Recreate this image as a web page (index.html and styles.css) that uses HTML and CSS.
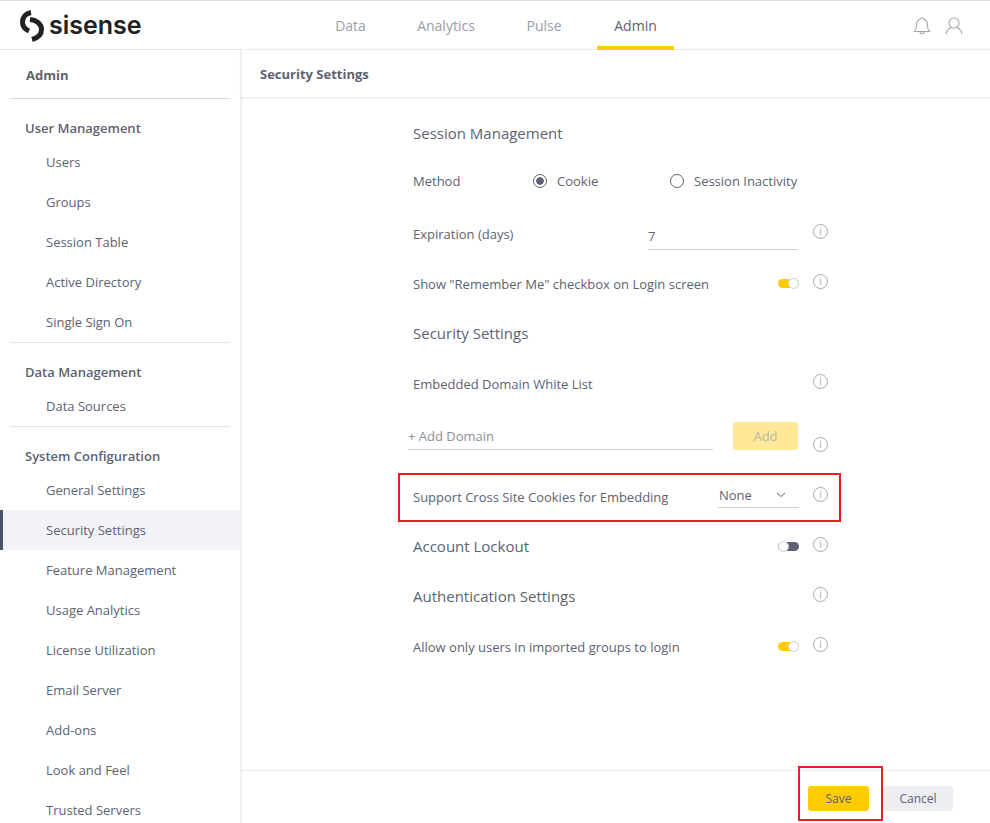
FILE: index.html
```html
<!DOCTYPE html>
<html lang="en">
<head>
    <meta charset="UTF-8">
    <meta name="viewport" content="width=device-width, initial-scale=1.0">
    <title>Security Settings</title>
    <link rel="stylesheet" href="styles.css">
</head>
<body>
    <header class="topbar">
        <div class="logo">
            <svg class="logo-mark" width="26" height="32" viewBox="0 0 26 32">
                <path d="M12 2.500C6.500 3.500 3.500 7.500 3.500 12C3.500 16.500 6.500 19.500 10 21" fill="none" stroke="#222" stroke-width="5"/>
                <path d="M11 9.500C17 10 22.500 13.500 22.500 19.500C22.500 24.500 18.500 28 13 29.500" fill="none" stroke="#222" stroke-width="5"/>
            </svg>
            <span class="logo-text">sisense</span>
        </div>
        <nav class="main-nav">
            <a class="nav-item">Data</a>
            <a class="nav-item">Analytics</a>
            <a class="nav-item">Pulse</a>
            <a class="nav-item active">Admin</a>
        </nav>
        <div class="top-icons">
            <svg width="18" height="20" viewBox="0 0 18 20" fill="none" stroke="#a4a7b0" stroke-width="1.100">
                <path d="M1.500 15.500C3 14 3.500 12.500 3.500 9.500C3.500 5.500 5.500 3.500 7.500 3C7.800 1.300 10.200 1.300 10.500 3C12.500 3.500 14.500 5.500 14.500 9.500C14.500 12.500 15 14 16.500 15.500Z"/>
                <path d="M7 15.500C7 18.500 11 18.500 11 15.500"/>
            </svg>
            <svg width="18" height="20" viewBox="0 0 18 20" fill="none" stroke="#a4a7b0" stroke-width="1.100">
                <circle cx="9" cy="7" r="5"/>
                <path d="M1 18C1.500 14.500 4 12.500 6 11.500M17 18C16.500 14.500 14 12.500 12 11.500"/>
            </svg>
        </div>
    </header>

    <div class="layout">
        <aside class="sidebar">
            <div class="side-title">Admin</div>
            <div class="side-group">
                <div class="group-name">User Management</div>
                <a class="side-link">Users</a>
                <a class="side-link">Groups</a>
                <a class="side-link">Session Table</a>
                <a class="side-link">Active Directory</a>
                <a class="side-link">Single Sign On</a>
            </div>
            <div class="side-group">
                <div class="group-name">Data Management</div>
                <a class="side-link">Data Sources</a>
            </div>
            <div class="side-group last">
                <div class="group-name">System Configuration</div>
                <a class="side-link">General Settings</a>
                <a class="side-link current">Security Settings</a>
                <a class="side-link">Feature Management</a>
                <a class="side-link">Usage Analytics</a>
                <a class="side-link">License Utilization</a>
                <a class="side-link">Email Server</a>
                <a class="side-link">Add-ons</a>
                <a class="side-link">Look and Feel</a>
                <a class="side-link">Trusted Servers</a>
            </div>
        </aside>

        <main class="content">
            <div class="content-head">Security Settings</div>
            <div class="settings">
                <div class="form">
                    <div class="row row-first"><h3>Session Management</h3></div>
                    <div class="row row-method">
                        <span class="method-label">Method</span>
                        <span class="radio checked"></span><span class="radio-text cookie">Cookie</span>
                        <span class="radio"></span><span class="radio-text">Session Inactivity</span>
                    </div>
                    <div class="row row-expire">
                        <span class="grow">Expiration (days)</span>
                        <span class="field">7</span>
                        <span class="info up">i</span>
                    </div>
                    <div class="row">
                        <span class="grow">Show "Remember Me" checkbox on Login screen</span>
                        <span class="toggle on"></span>
                        <span class="info up">i</span>
                    </div>
                    <div class="row">
                        <h3 class="grow heading-up">Security Settings</h3>
                    </div>
                    <div class="row">
                        <span class="grow">Embedded Domain White List</span>
                        <span class="info up">i</span>
                    </div>
                    <div class="row row-domain">
                        <span class="domain-field">+ Add Domain</span>
                        <button class="btn-add">Add</button>
                        <span class="info low">i</span>
                    </div>
                    <div class="row row-cross">
                        <span class="grow">Support Cross Site Cookies for Embedding</span>
                        <span class="select">None
                            <svg width="10" height="6" viewBox="0 0 10 6" fill="none" stroke="#5b6372" stroke-width="1"><path d="M1 1L5 4.500L9 1"/></svg>
                        </span>
                        <span class="info up">i</span>
                    </div>
                    <div class="row">
                        <h3 class="grow heading-up">Account Lockout</h3>
                        <span class="toggle off"></span>
                        <span class="info up">i</span>
                    </div>
                    <div class="row">
                        <h3 class="grow heading-up">Authentication Settings</h3>
                        <span class="info up">i</span>
                    </div>
                    <div class="row">
                        <span class="grow">Allow only users in imported groups to login</span>
                        <span class="toggle on"></span>
                        <span class="info up">i</span>
                    </div>
                </div>
            </div>
            <footer class="actions">
                <button class="btn-save">Save</button>
                <button class="btn-cancel">Cancel</button>
            </footer>
        </main>
    </div>
</body>
</html>
```

FILE: styles.css
```css
*, *::after {
    box-sizing: border-box;
}
html, body {
    height: 100%;
}
body {
    margin: 0;
    overflow: hidden;
    display: flex;
    flex-direction: column;
    background-color: white;
    font-family: 'Open Sans', 'Liberation Sans', sans-serif;
    font-size: 13px;
    color: #5b6372;
}
.topbar {
    height: 50px;
    flex: none;
    display: flex;
    align-items: center;
    border-top: 1px solid #dcdde1;
    border-bottom: 1px solid #ececee;
    position: relative;
}
.logo {
    width: 240px;
    flex: none;
    display: flex;
    align-items: center;
    padding: 0 0 0 19px;
}
.logo-mark {
    margin-top: 1px;
}
.logo-text {
    margin-left: 4px;
    font-family: 'Inter', sans-serif;
    font-size: 25px;
    font-weight: 600;
    color: #222;
    line-height: 30px;
}
.main-nav {
    display: flex;
    margin-left: 72px;
    height: 100%;
}
.nav-item {
    width: 77px;
    margin-right: 14px;
    font-size: 14px;
    text-align: center;
    line-height: 49px;
    color: #9a9da6;
}
.nav-item:nth-child(2) {
    width: 86px;
    margin-right: 18px;
}
.nav-item:nth-child(3) {
    width: 74px;
    margin-right: 16px;
}
.nav-item.active {
    color: #5b6372;
    height: 49px;
    border-bottom: 4px solid #ffcb05;
}
.top-icons {
    position: absolute;
    right: 27px;
    top: 15px;
    display: flex;
    gap: 14px;
}
.layout {
    flex: 1;
    display: flex;
    min-height: 0;
}
.sidebar {
    width: 241px;
    flex: none;
    overflow: hidden;
    border-right: 1px solid #ececee;
    box-shadow: 1px 0 3px rgba(0,0,0,0.06);
    position: relative;
    z-index: 1;
}
.side-title {
    height: 49px;
    margin: 0 10px;
    padding: 16px 16px 0;
    font-weight: 700;
    border-bottom: 1px solid #d9dade;
}
.side-group {
    border-bottom: 1px solid #e3e4e7;
    margin: 0 10px;
}
.side-group.last {
    border-bottom: none;
}
.group-name {
    height: 43px;
    padding: 19px 15px 0;
    font-weight: 600;
    line-height: 20px;
}
.side-link {
    display: block;
    height: 40px;
    margin: 0 -10px;
    padding-left: 46px;
    line-height: 40px;
}
.side-link.current {
    background-color: #f3f3f7;
    border-left: 3px solid #4b5265;
    padding-left: 43px;
}
.content {
    flex: 1;
    min-width: 0;
    display: flex;
    flex-direction: column;
}
.content-head {
    height: 48px;
    flex: none;
    padding: 0 19px;
    font-weight: 700;
    line-height: 48px;
    border-bottom: 1px solid #ececee;
    box-shadow: 0 1px 3px rgba(0,0,0,0.05);
}
.settings {
    flex: 1;
    padding: 11px 0 0 172px;
}
.form {
    width: 415px;
}
.row {
    height: 50px;
    display: flex;
    align-items: center;
}
h3 {
    margin: 0;
    font-size: 15px;
    font-weight: 400;
}
.heading-up {
    margin-top: -2px;
}
.grow {
    flex: 1;
}
.row-first {
    height: 48px;
    margin-bottom: 1px;
}
.row-method {
    height: 46px;
}
.row-expire {
    margin-top: 5px;
}
.method-label {
    width: 120px;
}
.radio {
    width: 14px;
    height: 14px;
    border: 1px solid #5b6372;
    border-radius: 50%;
    margin-right: 10px;
}
.radio.checked {
    background: radial-gradient(circle, #5b6372 0 3.5px, white 4px);
}
.radio-text.cookie {
    width: 113px;
}
.field {
    width: 150px;
    height: 30px;
    margin-top: 1px;
    margin-right: 15px;
    padding-top: 7px;
    line-height: 18px;
    border-bottom: 1px solid #cfd0d5;
}
.toggle {
    width: 21px;
    height: 9px;
    margin-top: -1px;
    margin-right: 14px;
    border-radius: 5px;
    position: relative;
}
.toggle::after {
    content: "";
    position: absolute;
    top: -1px;
    width: 11px;
    height: 11px;
    border-radius: 50%;
    background-color: white;
    border: 1px solid #cfd0d5;
}
.toggle.on {
    background-color: #ffcb05;
}
.toggle.on::after {
    right: 0;
}
.toggle.off {
    background-color: #5b6372;
}
.toggle.off::after {
    left: 0;
}
.info {
    width: 15px;
    height: 15px;
    flex: none;
    border: 1px solid #a4a7b0;
    border-radius: 50%;
    font-size: 10px;
    line-height: 13px;
    text-align: center;
    color: #a4a7b0;
}
.info.up {
    margin-top: -5px;
}
.info.low {
    margin-top: 19px;
}
.row-domain {
    height: 52px;
    margin-left: -5px;
}
.domain-field {
    width: 305px;
    height: 28px;
    margin-top: 1px;
    margin-right: 20px;
    line-height: 28px;
    color: #8d919b;
    border-bottom: 1px solid #cfd0d5;
}
.btn-add {
    width: 65px;
    height: 28px;
    margin: 1px 15px 0 0;
    border: none;
    border-radius: 3px;
    background-color: #ffe999;
    color: #b9b7a8;
    font: inherit;
}
.row-cross {
    height: 49px;
    margin: 12px -13px 0 -15px;
    padding: 0 11px 2px 13px;
    border: 2px solid #ed1c24;
}
.select {
    width: 81px;
    height: 24px;
    margin-top: -2px;
    margin-right: 14px;
    padding: 0 13px 0 1px;
    display: flex;
    align-items: center;
    justify-content: space-between;
    border-bottom: 1px solid #cfd0d5;
}
.actions {
    height: 53px;
    flex: none;
    display: flex;
    align-items: flex-start;
    justify-content: flex-end;
    gap: 14px;
    padding: 15px 37px 0 0;
    border-top: 1px solid #ececee;
}
.actions button {
    height: 25px;
    border: none;
    border-radius: 3px;
    font: inherit;
    font-size: 12px;
    color: #5b6372;
}
.btn-save {
    width: 61px;
    background-color: #ffcb05;
    position: relative;
}
.btn-save::after {
    content: "";
    position: absolute;
    top: -20px;
    left: -10px;
    width: 85px;
    height: 55px;
    border: 2px solid #ed1c24;
}
.btn-cancel {
    width: 70px;
    background-color: #edeef1;
}
```
